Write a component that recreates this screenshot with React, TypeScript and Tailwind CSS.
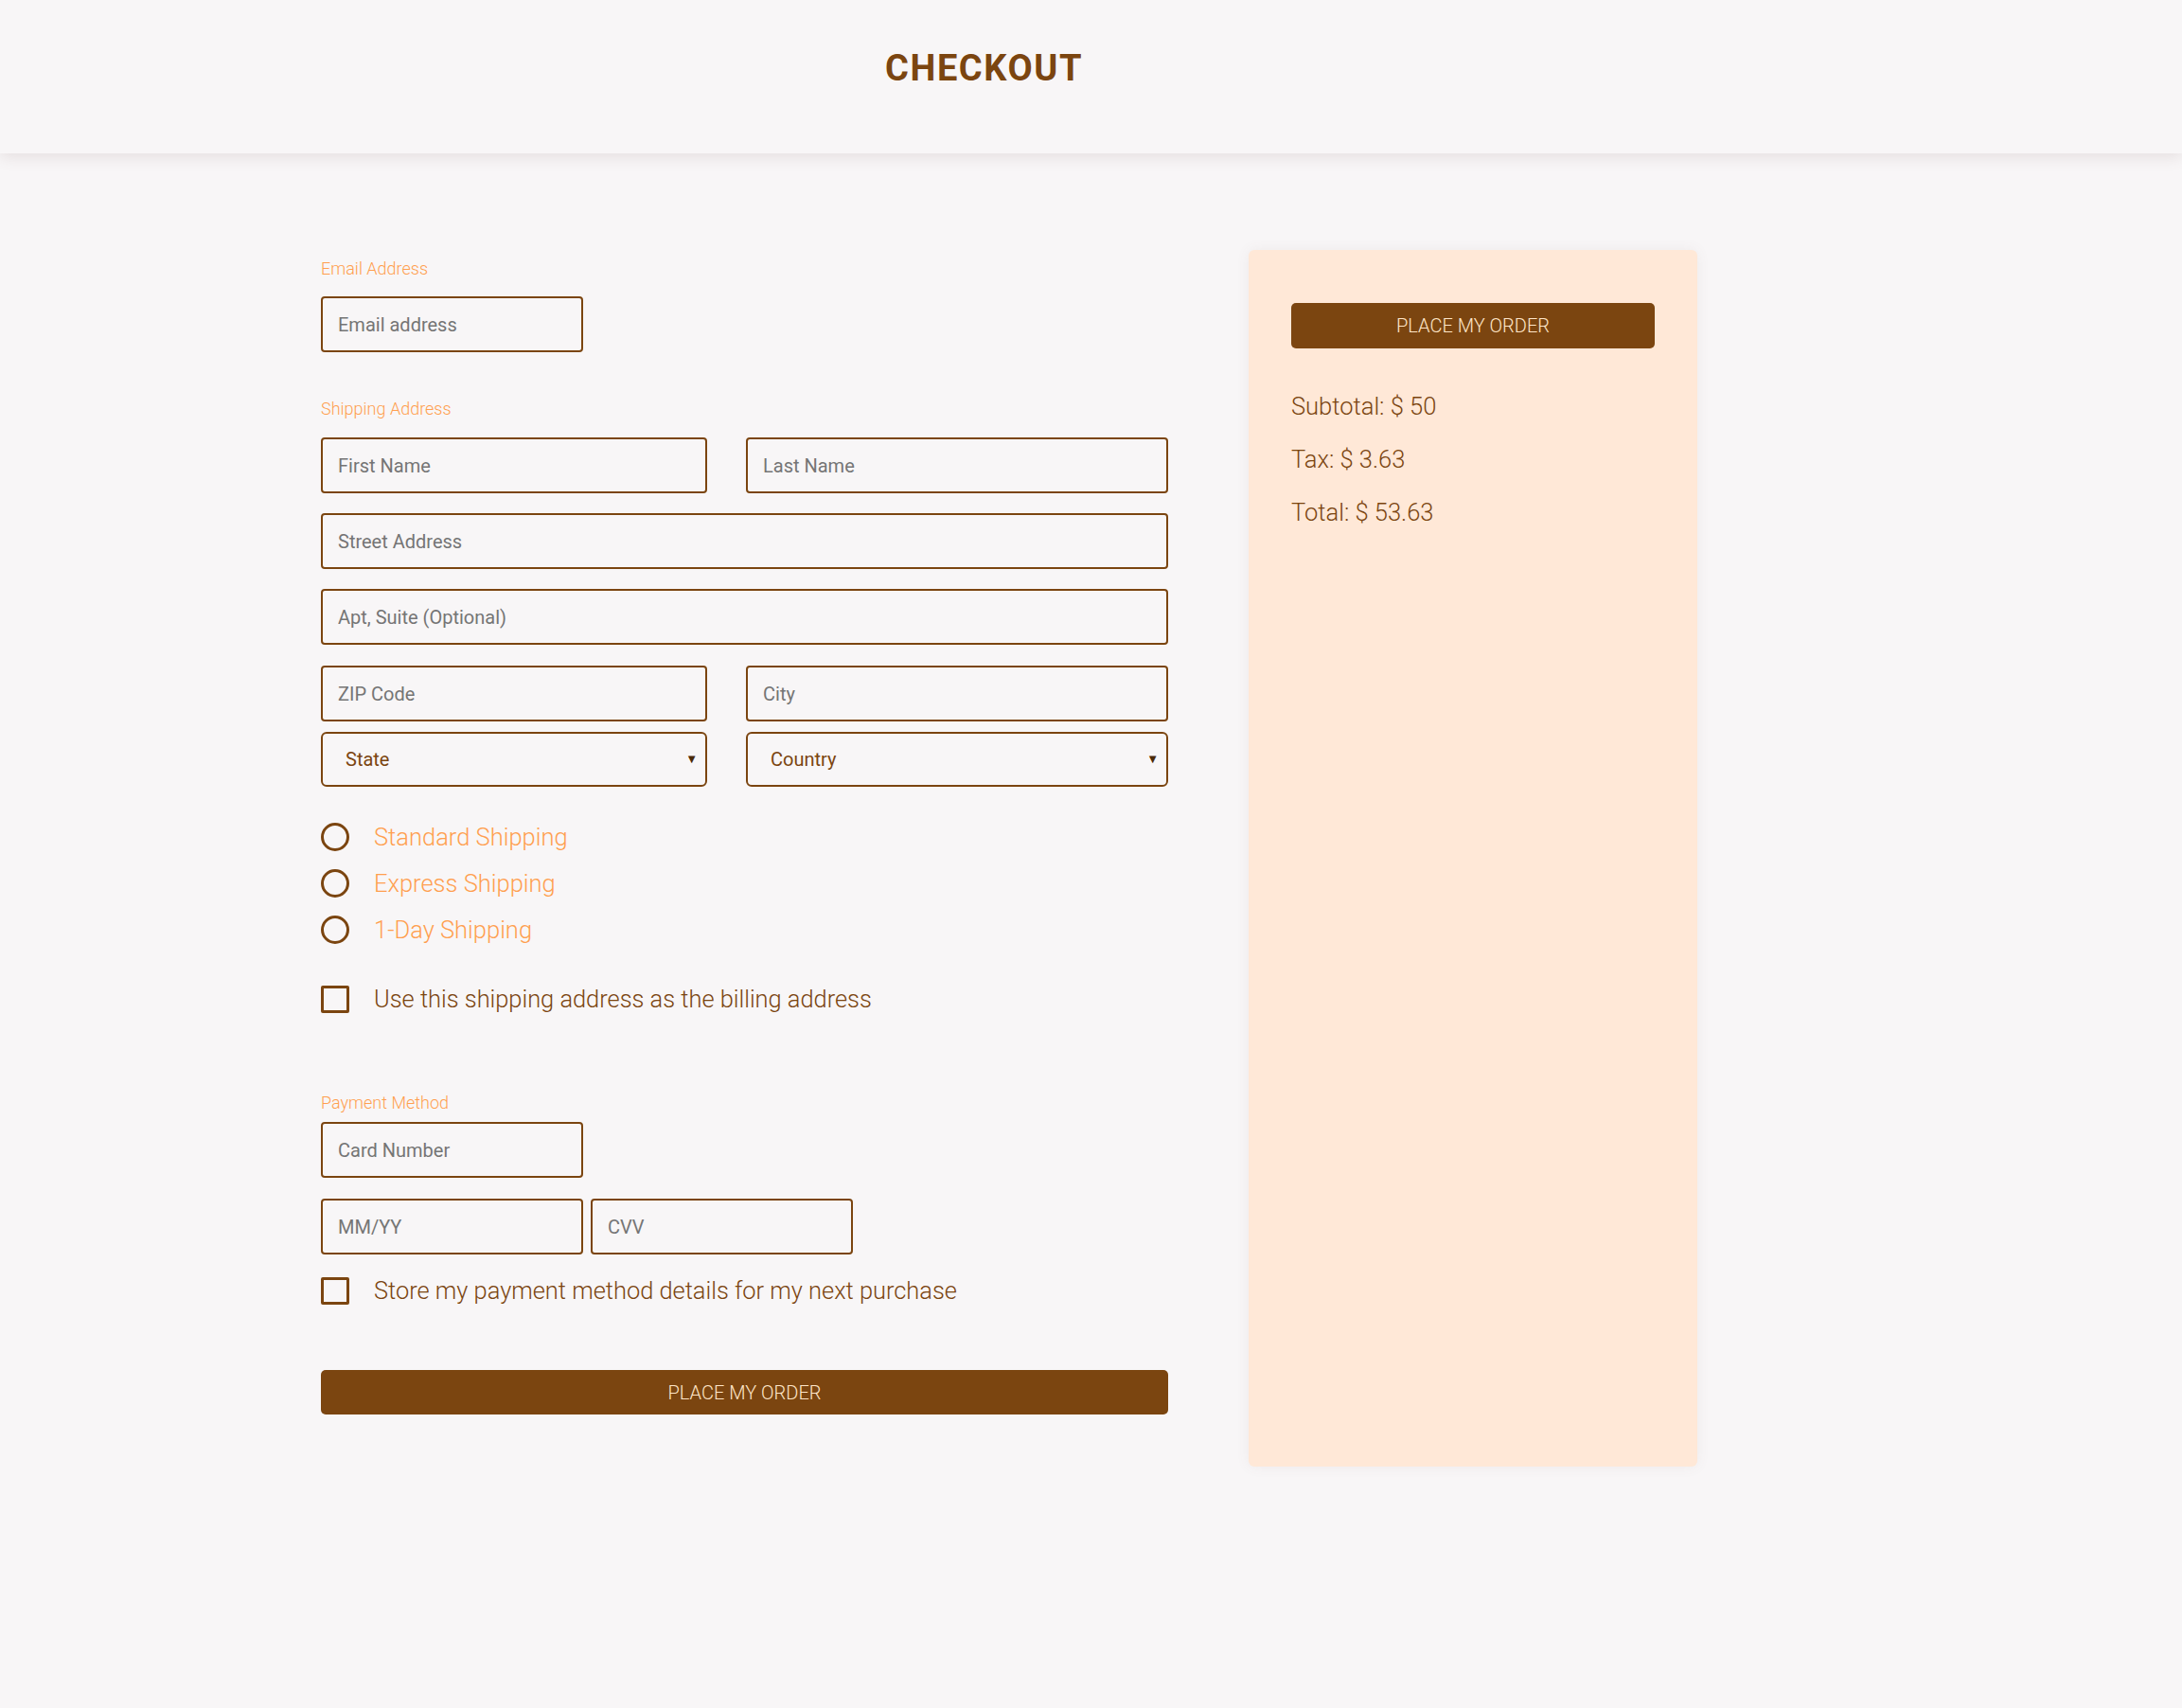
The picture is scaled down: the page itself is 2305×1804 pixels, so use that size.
import { useState } from 'react'

const brown = 'border-[#7b4510]'

function Field ({ placeholder, className = '' }: { placeholder: string, className?: string }) {
  return (
    <input
      type="text"
      placeholder={placeholder}
      className={`h-[59px] rounded-[4px] border-2 ${brown} bg-transparent pl-[16px] text-[20px] text-[#333] placeholder:text-[#757575] outline-none ${className}`}
    />
  )
}

function Select ({ label }: { label: string }) {
  return (
    <div className={`relative h-[58px] rounded-[6px] border-2 ${brown}`}>
      <select className="h-full w-full appearance-none bg-transparent pl-[24px] text-[20px] text-[#7b4510] outline-none">
        <option>{label}</option>
      </select>
      <span className="pointer-events-none absolute right-[8px] top-[17px] text-[13px] text-[#4a2a08]">▼</span>
    </div>
  )
}

export default function App () {
  const [shipping, setShipping] = useState('')
  const [sameBilling, setSameBilling] = useState(false)
  const [storeCard, setStoreCard] = useState(false)

  const options = ['Standard Shipping', 'Express Shipping', '1-Day Shipping']

  return (
    <div className="min-h-[1804px] bg-[#f8f6f7] font-['Roboto',sans-serif]">
      <header className="h-[162px] bg-[#f8f6f7] pl-[935px] pt-[53px] shadow-[0_5px_14px_rgba(120,90,90,0.13)]">
        <h1 className="text-[38px] font-bold leading-none tracking-[1.6px] text-[#7b4510]">CHECKOUT</h1>
      </header>

      <main className="flex items-start gap-[85px] pl-[339px] pt-[102px]">
        <form className="mt-[11px] flex w-[895px] flex-col" onSubmit={e => e.preventDefault()}>
          <label className="text-[18px] font-light leading-[18px] text-[#ff9f4f]">Email Address</label>
          <Field placeholder="Email address" className="mt-[20px] w-[277px]" />

          <label className="mt-[51px] text-[18px] font-light leading-[18px] text-[#ff9f4f]">Shipping Address</label>
          <div className="mt-[21px] flex flex-col gap-[21px]">
            <div className="grid grid-cols-[408px_1fr] gap-[41px]">
              <Field placeholder="First Name" />
              <Field placeholder="Last Name" />
            </div>
            <Field placeholder="Street Address" />
            <Field placeholder="Apt, Suite (Optional)" />
          </div>
          <div className="mt-[22px] grid grid-cols-[408px_1fr] gap-x-[41px] gap-y-[11px]">
            <Field placeholder="ZIP Code" />
            <Field placeholder="City" />
            <Select label="State" />
            <Select label="Country" />
          </div>

          <div className="mt-[38px] flex flex-col gap-[19px]">
            {options.map(o => (
              <label key={o} className="flex h-[30px] items-center gap-[26px]">
                <input
                  type="radio"
                  name="shipping"
                  checked={shipping === o}
                  onChange={() => setShipping(o)}
                  className="h-[30px] w-[30px] appearance-none rounded-full border-[3px] border-[#7b4510] checked:bg-[#7b4510]"
                />
                <span className="text-[25.5px] font-light text-[#ff9f4f]">{o}</span>
              </label>
            ))}
          </div>

          <label className="mt-[44px] flex h-[29px] items-center gap-[26px]">
            <input
              type="checkbox"
              checked={sameBilling}
              onChange={e => setSameBilling(e.target.checked)}
              className="h-[29px] w-[30px] appearance-none rounded-[2px] border-[3px] border-[#7b4510] checked:bg-[#7b4510]"
            />
            <span className="text-[25.4px] font-light text-[#7b4510]">Use this shipping address as the billing address</span>
          </label>

          <label className="mt-[86px] text-[18px] font-light leading-[18px] text-[#ff9f4f]">Payment Method</label>
          <Field placeholder="Card Number" className="mt-[11px] h-[58px] w-[277px]" />
          <div className="mt-[22px] flex gap-[8px]">
            <Field placeholder="MM/YY" className="h-[58px] w-[277px]" />
            <Field placeholder="CVV" className="h-[58px] w-[277px]" />
          </div>

          <label className="mt-[24px] flex h-[29px] items-center gap-[26px]">
            <input
              type="checkbox"
              checked={storeCard}
              onChange={e => setStoreCard(e.target.checked)}
              className="h-[29px] w-[30px] appearance-none rounded-[2px] border-[3px] border-[#7b4510] checked:bg-[#7b4510]"
            />
            <span className="text-[25.4px] font-light text-[#7b4510]">Store my payment method details for my next purchase</span>
          </label>

          <button className="mt-[69px] h-[47px] rounded-[5px] bg-[#7b4510] text-[20px] font-light text-[#ffe6c8]">PLACE MY ORDER</button>
        </form>

        <aside className="flex h-[1285px] w-[474px] flex-col rounded-[6px] bg-[#ffe8d7] px-[45px] pt-[56px] shadow-[0_0_14px_rgba(120,90,90,0.08)]">
          <button className="h-[48px] rounded-[5px] bg-[#7b4510] text-[20px] font-light text-[#ffe6c8]">PLACE MY ORDER</button>
          <div className="mt-[44px] flex flex-col gap-[22px] text-[25.5px] font-light leading-[34px] text-[#7b4510]">
            <p>Subtotal: $ 50</p>
            <p>Tax: $ 3.63</p>
            <p>Total: $ 53.63</p>
          </div>
        </aside>
      </main>
    </div>
  )
}
